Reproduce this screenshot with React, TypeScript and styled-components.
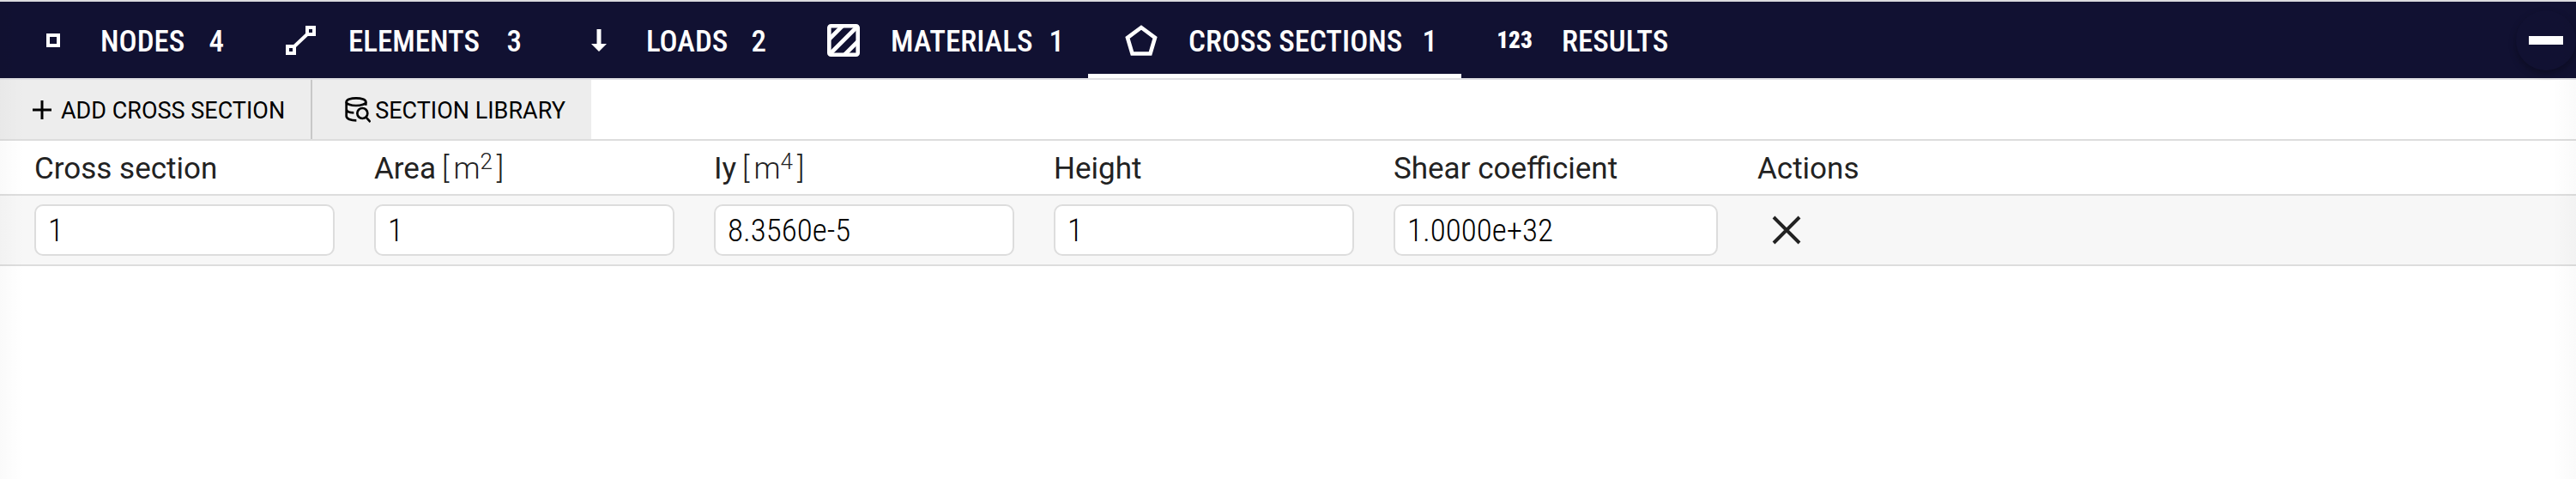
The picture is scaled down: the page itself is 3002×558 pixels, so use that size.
import React, { useState } from 'react';
import styled, { createGlobalStyle } from 'styled-components';

const LINE = '#dddddd';
const NAVY = '#111132';
const CONDENSED = '"Roboto Condensed", Roboto, "Liberation Sans", sans-serif';

const GlobalStyle = createGlobalStyle`
  *, *::before, *::after { box-sizing: border-box; }
  body { margin: 0; background: #ffffff; color: #222222; font-family: Roboto, "Liberation Sans", sans-serif; }
  button, input { font: inherit; color: inherit; }
`;

const Panel = styled.main`
  position: relative;
  min-height: 100vh;
  border-top: 2px solid #dcdcdf;
  overflow: hidden;

  &::after {
    content: '';
    position: absolute;
    inset: 0;
    pointer-events: none;
    background:
      linear-gradient(to right, rgba(0, 0, 0, 0.02), transparent 28px),
      linear-gradient(to left, rgba(0, 0, 0, 0.02), transparent 28px);
  }
`;

const NavBar = styled.header`
  display: flex;
  justify-content: space-between;
  align-items: center;
  height: 91px;
  background: ${NAVY};
  border-bottom: 2px solid #e0e0e4;
`;

const TabList = styled.nav`
  display: flex;
  align-self: stretch;
`;

const Tab = styled.button<{ $width: number; $active: boolean }>`
  display: flex;
  align-items: center;
  min-width: ${({ $width }) => $width}px;
  padding: 0 28px 0 38px;
  border: 0;
  background: transparent;
  color: #ffffff;
  font-family: ${CONDENSED};
  font-size: 35px;
  font-weight: 500;
  line-height: 40px;
  white-space: nowrap;
  cursor: pointer;
  box-shadow: ${({ $active }) => ($active ? 'inset 0 -5px 0 #ffffff' : 'none')};
`;

const TabIcon = styled.span`
  display: flex;
  justify-content: center;
  width: 48px;
  margin-right: 31px;
`;

const TabLabel = styled.span`
  padding-top: 5px;
`;

const TabCount = styled.span`
  margin-left: auto;
  padding: 5px 0 0 12px;
`;

const Digits = styled.span`
  font-size: 27px;
  font-weight: 900;
  line-height: 32px;
`;

const CollapseButton = styled.button`
  display: flex;
  align-items: center;
  justify-content: center;
  width: 70px;
  height: 70px;
  padding: 0;
  border: 0;
  border-radius: 50%;
  background: ${NAVY};
  box-shadow: 0 4px 8px rgba(0, 0, 0, 0.3);
  cursor: pointer;
`;

const CollapseBar = styled.span`
  width: 40px;
  height: 10px;
  background: #ffffff;
`;

const Toolbar = styled.div`
  display: flex;
  height: 71px;
  border-bottom: 2px solid ${LINE};
`;

const ToolButton = styled.button<{ $gap: number }>`
  display: flex;
  align-items: center;
  gap: ${({ $gap }) => $gap}px;
  padding: 0 30px 0 38px;
  border: 0;
  background: #ededed;
  color: #000000;
  font-size: 27px;
  line-height: 36px;
  white-space: nowrap;
  cursor: pointer;

  & + & { border-left: 2px solid #c8c8c8; }
`;

const ToolLabel = styled.span`
  padding-top: 3px;
`;

const Table = styled.table`
  width: 100%;
  border-collapse: separate;
  border-spacing: 0;
  table-layout: fixed;
`;

const Column = styled.col<{ $width?: number }>`
  width: ${({ $width }) => ($width ? `${$width}px` : 'auto')};
`;

const HeadCell = styled.th`
  height: 64px;
  padding: 4px 6px 0 40px;
  border-bottom: 2px solid ${LINE};
  font-size: 35px;
  font-weight: 400;
  line-height: 40px;
  text-align: left;
  white-space: nowrap;
`;

const Unit = styled.span`
  margin-left: 7px;
  font-weight: 300;
`;

const UnitText = styled.span`
  padding: 0 5px;

  sup {
    font-size: 26px;
    line-height: 0;
    vertical-align: 11px;
  }
`;

const Cell = styled.td`
  height: 82px;
  padding: 0 6px 0 40px;
  border-bottom: 2px solid ${LINE};
  background: #f7f7f7;
`;

const Field = styled.input`
  display: block;
  width: 100%;
  height: 60px;
  padding: 0 14px;
  border: 2px solid ${LINE};
  border-radius: 10px;
  background: #ffffff;
  color: #000000;
  font-family: ${CONDENSED};
  font-size: 37px;
  font-weight: 300;
`;

const DeleteButton = styled.button`
  display: flex;
  padding: 13px 17px;
  border: 0;
  background: transparent;
  cursor: pointer;
`;

const NodeIcon = () => (
  <svg width="16" height="16" viewBox="0 0 16 16" fill="none" stroke="currentColor" strokeWidth="4">
    <rect x="2" y="2" width="12" height="12" />
  </svg>
);

const ElementIcon = () => (
  <svg width="36" height="34" viewBox="0 0 36 34" fill="none" stroke="currentColor" strokeWidth="4">
    <path d="M9 25 27 8" />
    <rect x="2" y="24" width="8" height="8" fill={NAVY} />
    <rect x="25" y="2" width="8" height="8" fill={NAVY} />
  </svg>
);

const LoadIcon = () => (
  <svg width="18" height="26" viewBox="0 0 18 26" fill="currentColor">
    <path d="M6.500 0h5v17H18L9 26 0 17h6.500z" />
  </svg>
);

const MaterialIcon = () => (
  <svg width="38" height="38" viewBox="0 0 38 38" fill="none" stroke="currentColor" strokeWidth="4.600">
    <rect x="2.300" y="2.300" width="33.400" height="33.400" rx="2" />
    <path d="M2 18 18 2M3 35 35 3M20 36 36 20" />
  </svg>
);

const PentagonIcon = () => (
  <svg width="38" height="36" viewBox="0 0 38 36" fill="none" stroke="currentColor" strokeWidth="4.600">
    <path d="M19 3 3 15 8.500 33.500h21L35 15z" />
  </svg>
);

const PlusIcon = () => (
  <svg width="22" height="22" viewBox="0 0 22 22" stroke="currentColor" strokeWidth="3">
    <path d="M11 0v22M0 11h22" />
  </svg>
);

const LibraryIcon = () => (
  <svg width="30" height="30" viewBox="0 0 90 90" fill="none" stroke="currentColor" strokeWidth="8">
    <ellipse cx="39" cy="17" rx="34" ry="13" />
    <path d="M5 17v50c0 9 15 15 35 15M5 42c0 8 10 13 26 13M73 17v12" />
    <circle cx="61" cy="57" r="18" />
    <path d="m73 70 16 17" />
  </svg>
);

const CloseIcon = () => (
  <svg width="34" height="34" viewBox="0 0 34 34" stroke="currentColor" strokeWidth="4">
    <path d="m2 2 30 30M32 2 2 32" />
  </svg>
);

type TabItem = { label: string; count?: number; width: number; icon: React.ReactNode };

const tabs: TabItem[] = [
  { label: 'NODES', count: 4, width: 289, icon: <NodeIcon /> },
  { label: 'ELEMENTS', count: 3, width: 347, icon: <ElementIcon /> },
  { label: 'LOADS', count: 2, width: 285, icon: <LoadIcon /> },
  { label: 'MATERIALS', count: 1, width: 347, icon: <MaterialIcon /> },
  { label: 'CROSS SECTIONS', count: 1, width: 435, icon: <PentagonIcon /> },
  { label: 'RESULTS', width: 280, icon: <Digits>123</Digits> },
];

type ColumnItem = { label: string; power?: number; width: number; value: string };

const columns: ColumnItem[] = [
  { label: 'Cross section', width: 396, value: '1' },
  { label: 'Area', power: 2, width: 396, value: '1' },
  { label: 'Iy', power: 4, width: 396, value: '8.3560e-5' },
  { label: 'Height', width: 396, value: '1' },
  { label: 'Shear coefficient', width: 424, value: '1.0000e+32' },
];

export default function App() {
  const [active, setActive] = useState('CROSS SECTIONS');

  return (
    <>
      <GlobalStyle />
      <Panel>
        <NavBar>
          <TabList>
            {tabs.map(({ label, count, width, icon }) => (
              <Tab key={label} type="button" $width={width} $active={label === active} onClick={() => setActive(label)}>
                <TabIcon aria-hidden="true">{icon}</TabIcon>
                <TabLabel>{label}</TabLabel>
                {count !== undefined && <TabCount>{count}</TabCount>}
              </Tab>
            ))}
          </TabList>
          <CollapseButton type="button" aria-label="Collapse panel">
            <CollapseBar />
          </CollapseButton>
        </NavBar>
        <Toolbar>
          <ToolButton type="button" $gap={11}>
            <PlusIcon />
            <ToolLabel>ADD CROSS SECTION</ToolLabel>
          </ToolButton>
          <ToolButton type="button" $gap={5}>
            <LibraryIcon />
            <ToolLabel>SECTION LIBRARY</ToolLabel>
          </ToolButton>
        </Toolbar>
        <Table>
          <colgroup>
            {columns.map(({ label, width }) => (
              <Column key={label} $width={width} />
            ))}
            <Column />
          </colgroup>
          <thead>
            <tr>
              {columns.map(({ label, power }) => (
                <HeadCell key={label} scope="col">
                  {label}
                  {power !== undefined && (
                    <Unit>
                      [<UnitText>m<sup>{power}</sup></UnitText>]
                    </Unit>
                  )}
                </HeadCell>
              ))}
              <HeadCell scope="col">Actions</HeadCell>
            </tr>
          </thead>
          <tbody>
            <tr>
              {columns.map(({ label, value }) => (
                <Cell key={label}>
                  <Field type="text" aria-label={label} defaultValue={value} />
                </Cell>
              ))}
              <Cell>
                <DeleteButton type="button" aria-label="Delete cross section">
                  <CloseIcon />
                </DeleteButton>
              </Cell>
            </tr>
          </tbody>
        </Table>
      </Panel>
    </>
  );
}
